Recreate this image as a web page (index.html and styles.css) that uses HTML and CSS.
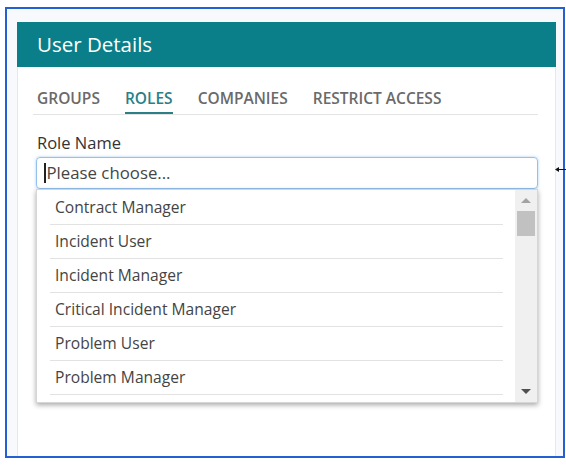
FILE: index.html
```html
<!DOCTYPE html>
<html lang="en">
<head>
    <meta charset="UTF-8">
    <meta name="viewport" content="width=device-width, initial-scale=1.0">
    <title>User Details</title>
    <link rel="stylesheet" href="styles.css">
</head>
<body>
    <div class="frame">
        <div class="card">
            <div class="card-header">User Details</div>
            <div class="card-body">
                <div class="tabs">
                    <div class="tab">GROUPS</div>
                    <div class="tab active">ROLES</div>
                    <div class="tab">COMPANIES</div>
                    <div class="tab">RESTRICT ACCESS</div>
                </div>

                <div class="field">
                    <div class="label">Role Name</div>
                    <div class="select-input"><span class="caret"></span>Please choose...</div>
                    <div class="dropdown">
                        <div class="options">
                            <div class="option">Contract Manager</div>
                            <div class="option">Incident User</div>
                            <div class="option">Incident Manager</div>
                            <div class="option">Critical Incident Manager</div>
                            <div class="option">Problem User</div>
                            <div class="option">Problem Manager</div>
                        </div>
                        <div class="scrollbar">
                            <div class="scroll-btn"><span class="arrow-up"></span></div>
                            <div class="thumb"></div>
                            <div class="track"></div>
                            <div class="scroll-btn bottom"><span class="arrow-down"></span></div>
                        </div>
                    </div>
                </div>
            </div>
        </div>
    </div>

    <!-- annotation arrow pointing at the input -->
    <svg class="pointer" width="12" height="7" viewBox="0 0 12 7">
        <path d="M0 3.5 L4 1 L4 6 Z" fill="#111"/>
        <line x1="3" y1="3.5" x2="12" y2="3.5" stroke="#111" stroke-width="1"/>
    </svg>
</body>
</html>
```

FILE: styles.css
```css
body {
    margin: 0;
    background-color: white;
    font-family: "Open Sans", "Liberation Sans", sans-serif;
}
.frame {
    margin: 7px 0 0 5px;
    width: 560px;
    height: 451px;
    box-sizing: border-box;
    border: 2px solid #2361d2;
    background-color: #f7f9fc;
    padding: 13px 0 0 10px;
    display: flex;
    flex-direction: column;
    overflow: hidden;
}
.card {
    width: 539px;
    flex: 1;
    box-sizing: border-box;
    background-color: white;
    border-left: 1px solid #e6e8ea;
    border-right: 1px solid #e6e8ea;
}
.card-header {
    height: 45px;
    line-height: 45px;
    margin: 0 -1px;
    padding-left: 20px;
    background-color: #0a7f89;
    color: white;
    font-size: 20.5px;
}
.card-body {
    padding: 0 17px 0 15px;
}
.tabs {
    display: flex;
    gap: 25px;
    padding: 0 4px;
    border-bottom: 1px solid #e3e3e3;
}
.tab {
    padding: 21px 0 3px;
    line-height: 21px;
    font-size: 15.5px;
    font-weight: 600;
    color: #6a6a6a;
    border-bottom: 2px solid transparent;
}
.tab.active {
    color: #2b7f87;
    border-bottom-color: #2b7f87;
}
.field {
    padding-left: 3px;
    margin-top: 17px;
}
.label {
    padding-left: 1px;
    font-size: 16.5px;
    line-height: 21px;
    color: #333;
    margin-bottom: 4px;
}
.select-input {
    width: 502px;
    height: 32px;
    box-sizing: border-box;
    border: 1px solid #93c1ee;
    border-radius: 4px;
    box-shadow: 0 0 3px rgba(110, 170, 235, 0.6);
    padding-left: 7px;
    font-size: 16.8px;
    line-height: 30px;
    color: #454545;
    display: flex;
    align-items: center;
}
.caret {
    display: inline-block;
    width: 1.5px;
    height: 20px;
    background-color: #222;
    margin-right: 1px;
}
.dropdown {
    width: 502px;
    height: 214px;
    box-sizing: border-box;
    border: 1px solid #d6d6d6;
    box-shadow: 0 2px 5px rgba(0, 0, 0, 0.35);
    display: flex;
    overflow: hidden;
    background-color: white;
}
.options {
    flex: 1;
    padding: 1px 12px 0 13px;
}
.option {
    line-height: 33px;
    border-bottom: 1px solid #e2e2e2;
    padding-left: 5px;
    font-size: 15.6px;
    color: #444;
}
.scrollbar {
    width: 22px;
    background-color: #f0f0f0;
    display: flex;
    flex-direction: column;
}
.scroll-btn {
    height: 21px;
    display: flex;
    align-items: center;
    justify-content: center;
}
.scroll-btn.bottom {
    height: 22px;
}
.arrow-up {
    width: 0;
    height: 0;
    border-left: 5px solid transparent;
    border-right: 5px solid transparent;
    border-bottom: 5px solid #a3a3a3;
}
.arrow-down {
    width: 0;
    height: 0;
    border-left: 5px solid transparent;
    border-right: 5px solid transparent;
    border-top: 5px solid #505050;
}
.thumb {
    height: 25px;
    margin: 0 2px;
    background-color: #c1c1c1;
}
.track {
    flex: 1;
}
.pointer {
    position: absolute;
    left: 555px;
    top: 166px;
}
```
